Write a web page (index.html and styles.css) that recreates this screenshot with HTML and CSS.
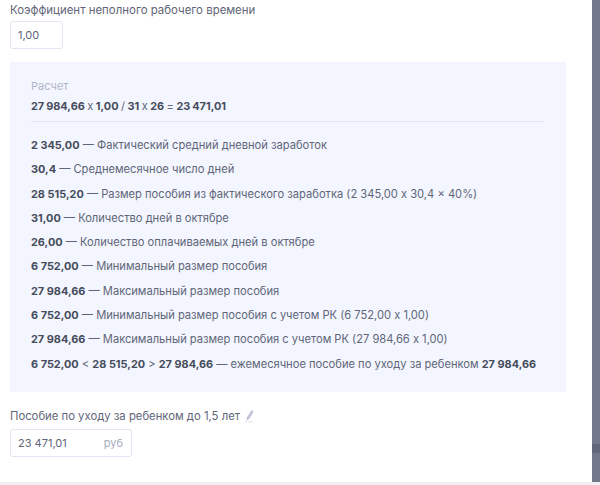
FILE: index.html
```html
<!DOCTYPE html>
<html lang="ru">
<head>
<meta charset="utf-8">
<title>Расчет пособия</title>
<link rel="stylesheet" href="styles.css">
</head>
<body>
<div class="page">
  <main class="content">
    <div class="label">Коэффициент неполного рабочего времени</div>
    <div class="input input-small">1,00</div>
    <section class="calc">
      <div class="calc-title">Расчет</div>
      <div class="formula"><b>27 984,66</b> x <b>1,00</b> / <b>31</b> x <b>26</b> = <b>23 471,01</b></div>
      <div class="divider"></div>
      <div class="row"><b>2 345,00</b> — Фактический средний дневной заработок</div>
      <div class="row"><b>30,4</b> — Среднемесячное число дней</div>
      <div class="row"><b>28 515,20</b> — Размер пособия из фактического заработка (2 345,00 x 30,4 x 40%)</div>
      <div class="row"><b>31,00</b> — Количество дней в октябре</div>
      <div class="row"><b>26,00</b> — Количество оплачиваемых дней в октябре</div>
      <div class="row"><b>6 752,00</b> — Минимальный размер пособия</div>
      <div class="row"><b>27 984,66</b> — Максимальный размер пособия</div>
      <div class="row"><b>6 752,00</b> — Минимальный размер пособия с учетом РК (6 752,00 x 1,00)</div>
      <div class="row"><b>27 984,66</b> — Максимальный размер пособия с учетом РК (27 984,66 x 1,00)</div>
      <div class="row"><b>6 752,00</b> &lt; <b>28 515,20</b> &gt; <b>27 984,66</b> — ежемесячное пособие по уходу за ребенком <b>27 984,66</b></div>
    </section>
    <div class="label label-icon">Пособие по уходу за ребенком до 1,5 лет
      <svg class="pencil" width="8" height="13" viewBox="0 0 8 13" aria-hidden="true"><path d="M5.6 .8 L7 1.6 L2.8 8.8 L1.2 9.8 L1.3 7.9 Z" fill="#c9cde0" stroke="#a9aec6" stroke-width=".8"/><path d="M0 11.8 H7.5" stroke="#b8bcd0" stroke-width="1" stroke-dasharray="1 1.4"/></svg>
    </div>
    <div class="input input-wide"><span>23 471,01</span><span class="unit">руб</span></div>
  </main>
  <div class="scrollbar">
    <div class="thumb-mark"></div>
  </div>
</div>
<div class="footer-line"></div>
</body>
</html>
```
FILE: styles.css
```css
* { box-sizing: border-box; }
html, body { margin: 0; height: 485px; overflow: hidden; background: #fff; }
body { display: flex; flex-direction: column; font-family: "Inter", "Liberation Sans", sans-serif; font-size: 11px; color: #5f6579; }
.page { display: flex; flex: 1; min-height: 0; }
.content { flex: 1; padding: 2px 0 0 10px; min-width: 0; }
.label { font-size: 11.45px; line-height: 15px; padding-top: 1px; }
.input { display: flex; align-items: center; height: 28px; padding: 0 7px; border: 1px solid #e2e5f2; border-radius: 3px; }
.input-small { width: 53px; margin-top: 3px; }
.input-wide { width: 122px; justify-content: space-between; padding-right: 8px; margin-top: 5px; }
.unit { color: #a6abc0; }
.calc { width: 556px; height: 330px; margin: 13px 0 16px; padding: 18px 21px 0; background: #f3f6fe; }
.calc-title { line-height: 13px; color: #b0b5c8; }
.formula { margin-top: 6px; line-height: 15px; word-spacing: -0.6px; }
.divider { height: 1px; margin: 7px 0 16px; background: #e0e4f0; width: 513px; }
.row { font-size: 11.15px; line-height: 15px; margin-bottom: 9.3px; white-space: nowrap; }
b { font-size: 10.9px; font-weight: 700; color: #464c5d; }
.label-icon { display: flex; align-items: center; gap: 6px; font-size: 11.3px; }
.pencil { flex: none; }
.scrollbar { width: 8px; background: #73778a; }
.thumb-mark { height: 9px; margin-top: 444px; background: #62667a; }
.footer-line { height: 3px; background: #f0f0f5; }
```
